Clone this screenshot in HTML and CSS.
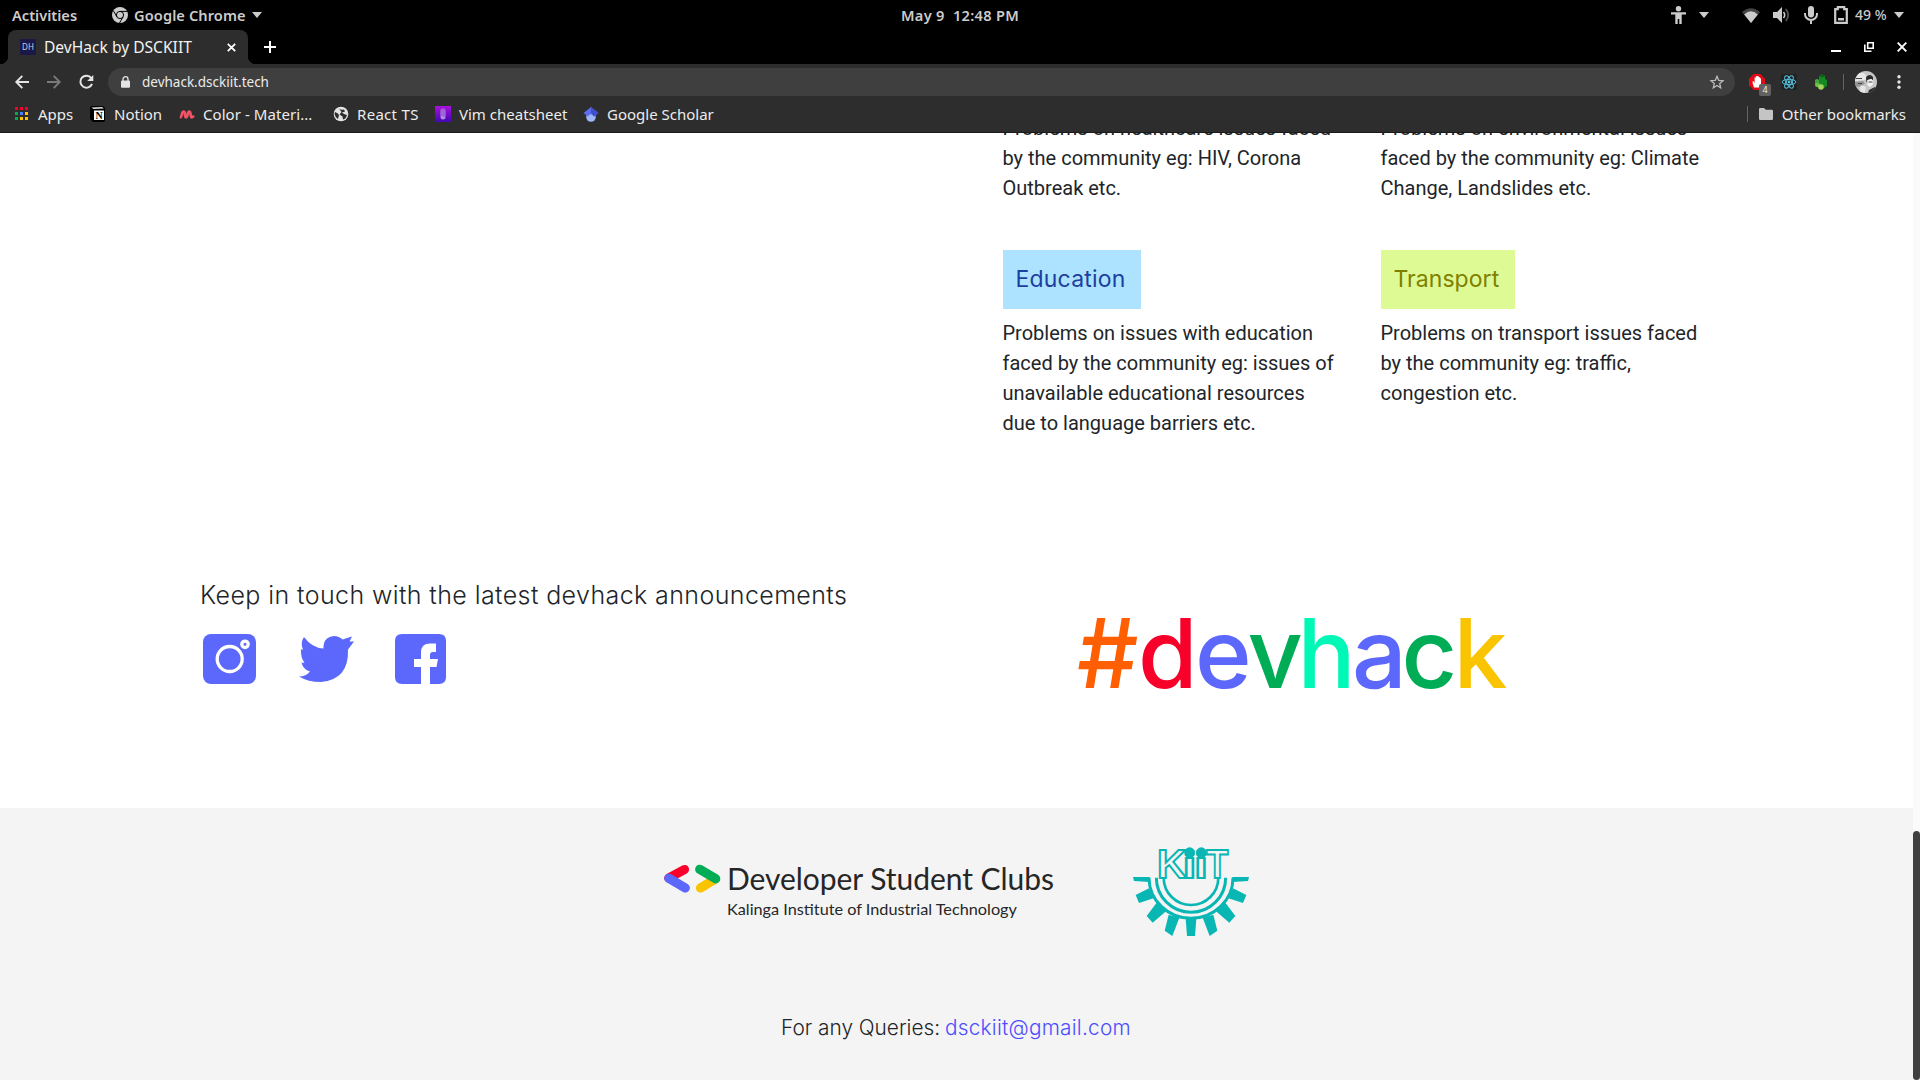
FILE: index.html
```
<!DOCTYPE html>
<html lang="en">
<head>
<meta charset="utf-8">
<title>DevHack by DSCKIIT</title>
<link rel="stylesheet" href="styles.css">
</head>
<body>
<header class="topbar">
  <div class="top-left">
    <span class="activities">Activities</span>
    <svg class="chrome-ic" viewBox="0 0 16 16"><circle cx="8" cy="8" r="8" fill="#ccc"/><g fill="none" stroke="#000" stroke-width="1"><circle cx="8" cy="8" r="3.6"/><path d="M8 4.4h7.4M4.9 9.8L1.3 3.6M11.1 9.8L7.5 16"/></g></svg>
    <span class="appname">Google Chrome</span>
    <i class="caret"></i>
  </div>
  <span class="clock">May 9&nbsp; 12:48 PM</span>
  <div class="top-right">
    <svg class="access" viewBox="0 0 15 18" fill="#ccc"><circle cx="7.5" cy="2.7" r="2.7"/><path d="M0 6.2h15v2.3h-4.3V18H8.3v-5H6.7v5H4.3V8.5H0z"/></svg>
    <i class="caret access-caret"></i>
    <svg class="wifi" viewBox="0 0 18 15"><path d="M9 15L0 4Q9-3.6 18 4z" fill="#444"/><path d="M9 15L2.2 6.6Q9 0 15.8 6.6z" fill="#ccc"/></svg>
    <svg class="vol" viewBox="0 0 17 16"><path d="M0 5h4l5-5v16l-5-5H0z" fill="#ccc"/><path d="M10.5 5q2.4 3 0 6" fill="none" stroke="#ccc" stroke-width="1.6"/><path d="M12.7 2q5 6 0 12" fill="none" stroke="#555" stroke-width="1.8"/></svg>
    <svg class="mic" viewBox="0 0 14 18"><rect x="4" y="0" width="6" height="11.5" rx="3" fill="#ccc"/><path d="M1 7v1a6 6 0 0 0 12 0V7M7 14v4" fill="none" stroke="#ccc" stroke-width="2"/></svg>
    <svg class="batt" viewBox="0 0 14 18"><path d="M1.2 3.2h2.6V1.2h6.4v2h2.6v13.6H1.2z" fill="none" stroke="#ccc" stroke-width="2.2"/><path d="M4 12h6v2.5H4z" fill="#ccc"/></svg>
    <span class="pct">49 %</span>
    <i class="caret"></i>
  </div>
</header>

<div class="tabstrip">
  <div class="tab">
    <span class="fav">DH</span>
    <span class="tab-title">DevHack by DSCKIIT</span>
    <svg class="tab-x" viewBox="0 0 9 9"><path d="M.8.8l7.4 7.4M8.2.8L.8 8.2" stroke="#fff" stroke-width="1.8"/></svg>
  </div>
  <svg class="plus" viewBox="0 0 12 12"><path d="M6 0v12M0 6h12" stroke="#fff" stroke-width="2"/></svg>
  <div class="winctl">
    <svg width="10" height="10" viewBox="0 0 10 10"><path d="M0 9h10" stroke="#fff" stroke-width="2"/></svg>
    <svg width="10" height="10" viewBox="0 0 10 10" fill="none" stroke="#fff"><path d="M3.7.8h5.5v5.4H3.7z" stroke-width="1.6"/><path d="M.8 2.5v6.7h6.7" stroke-width="1.6"/></svg>
    <svg width="10" height="10" viewBox="0 0 10 10"><path d="M.7.7l8.6 8.6M9.3.7L.7 9.3" stroke="#fff" stroke-width="1.9"/></svg>
  </div>
</div>

<div class="toolbar">
  <svg class="back" viewBox="0 0 14 14" fill="none" stroke="#e4e4e4" stroke-width="1.9"><path d="M14 7H1.5M7.3.8L1.3 7l6 6.2"/></svg>
  <svg class="fwd" viewBox="0 0 14 14" fill="none" stroke="#7a7a7a" stroke-width="1.9"><path d="M0 7h12.5M6.7.8l6 6.2-6 6.2"/></svg>
  <svg class="reload" viewBox="0 0 15 14"><path d="M12.3 3.2A6 6 0 1 0 13 8.8" fill="none" stroke="#e4e4e4" stroke-width="2"/><path d="M14.3 0v6H8.2z" fill="#e4e4e4"/></svg>
  <div class="omnibox">
    <svg class="lock" viewBox="0 0 9 12"><path d="M2 5V3.2a2.5 2.5 0 0 1 5 0V5" fill="none" stroke="#e4e4e4" stroke-width="1.3"/><rect y="4.4" width="9" height="7.4" rx="1" fill="#e4e4e4"/></svg>
    <span class="url">devhack.dsckiit.tech</span>
    <svg class="star" viewBox="0 0 14 14"><path d="M7 1.3l1.7 4 4.3.4-3.3 2.8 1 4.3L7 10.500l-3.700 2.300 1-4.300L1 5.700l4.300-.4z" fill="none" stroke="#bbb" stroke-width="1.3"/></svg>
  </div>
  <div class="adblock">
    <svg viewBox="0 0 16 16"><path d="M4.7 0h6.6L16 4.7v6.6L11.3 16H4.7L0 11.300V4.700z" fill="#e60a14"/><path d="M5 13.500Q3.600 10 3.400 7.400l1.200-.2 1 2V3.500h1.300V2.300h1.300V2h1.300v1h1.300v1.200h1.200V10q0 2-1.300 3.500z" fill="#fff"/></svg>
    <span class="count">4</span>
  </div>
  <svg class="react" viewBox="0 0 16 16"><path fill="#222" d="M0 0h16v16H0z"/><g fill="none" stroke="#53c1de" stroke-width="1"><ellipse cx="8" cy="8" rx="6.900" ry="2.700"/><ellipse cx="8" cy="8" rx="6.900" ry="2.700" transform="rotate(60 8 8)"/><ellipse cx="8" cy="8" rx="6.900" ry="2.700" transform="rotate(120 8 8)"/></g><circle cx="8" cy="8" r="1.400" fill="#53c1de"/></svg>
  <svg class="green" viewBox="0 0 12 16"><path d="M4 2q3-3 6 0v3l2 1v6l-3 2H4z" fill="#158a22"/><path d="M4 2q3-3 6 0-3 3-6 0z" fill="#0c6518"/><path d="M0 6q2-2 4 0v6H0z" fill="#3fa63c"/><circle cx="2.500" cy="11" r="2.300" fill="#6cc04a"/><circle cx="6" cy="13" r="2.800" fill="#a3d65c"/></svg>
  <i class="vsep"></i>
  <svg class="avatar" viewBox="0 0 22 22"><defs><clipPath id="av"><circle cx="11" cy="11" r="11"/></clipPath></defs><g clip-path="url(#av)"><path fill="#c6c6c6" d="M0 0h22v22H0z"/><path fill="#e6e6e6" d="M0 2h9l3 4-2 3-10 1zM6 14l5 2-1 6H4z"/><path fill="#959595" d="M0 11l8-1 2 3-7 3-3-1z"/><path fill="#2b2b2b" d="M11 6q4-4 7 0v4l-1.500-2-4 1-1 3zM14 19l6-3 2 6h-9z"/><path fill="#f3f3f3" d="M12.500 9l4-1 2 2-1 4-3 2-2-2z"/><path fill="#444" d="M1 7h6v1H1zM3 12h4v1H3zM13.500 10.500h4v1h-4z"/></g></svg>
  <svg class="dots" viewBox="0 0 4 14" fill="#e4e4e4"><circle cx="2" cy="1.700" r="1.700"/><circle cx="2" cy="7" r="1.700"/><circle cx="2" cy="12.300" r="1.700"/></svg>
</div>

<nav class="bookmarks">
  <a class="bm bm-apps"><svg viewBox="0 0 16 16"><path fill="#f4002a" d="M1 1h3v3H1zM6 1h3v3H6zM11 1h3v3h-3z"/><path fill="#00ac54" d="M1 6h3v3H1zM1 11h3v3H1z"/><path fill="#4a7dff" d="M6 6h3v3H6z"/><path fill="#fcc404" d="M11 6h3v3h-3zM6 11h3v3H6zM11 11h3v3h-3z"/></svg>Apps</a>
  <a class="bm bm-notion"><svg viewBox="0 0 16 16"><path d="M0 1l2-1h11l2 2v13l-1 1H3l-3-3z" fill="#000"/><path d="M1.500 1.500L12 1l2 1.500L3.500 3z" fill="#ddd"/><path d="M4 4.500h10V14H4z" fill="#fff"/><text x="9" y="13" text-anchor="middle" class="n-glyph">N</text></svg>Notion</a>
  <a class="bm bm-color"><svg viewBox="0 0 16 16"><path d="M.8 11.500q1.400 0 2-3t1.800-3q1.200 0 1.400 3t1 3q1 0 1.600-3t1.600-3q1.200 0 1.400 3t1.200 3q1 0 2-2" fill="none" stroke="#f25268" stroke-width="2.700"/></svg>Color - Materi...</a>
  <a class="bm bm-react"><svg viewBox="0 0 16 16"><circle cx="8" cy="8" r="7.300" fill="#e4e4e4"/><path d="M2 6q3 1 4 3l-1 4q-3-2-3.500-5zM6 2.500q2 2 5 1l1 2-3 1 2 1.500 3 1q-1 4-4 4.500l-.5-3-3-2 2-2.500z" fill="#2d2d2d"/></svg>React TS</a>
  <a class="bm bm-vim"><svg viewBox="0 0 16 16"><defs><linearGradient id="vg" x1="0" y1="0" x2="0" y2="1"><stop offset="0" stop-color="#a912dc"/><stop offset="1" stop-color="#4208b4"/></linearGradient></defs><path fill="url(#vg)" d="M0 0h16v16H0z"/><rect x="5.500" y="2.500" width="5" height="11" rx="2.500" fill="#b28ae0"/><path d="M7 10V4.500a1 1 0 0 1 2 0V11" fill="none" stroke="#7626c4" stroke-width=".7"/></svg>Vim cheatsheet</a>
  <a class="bm bm-scholar"><svg viewBox="0 0 16 16"><circle cx="8" cy="11" r="4.800" fill="#9db6fa"/><path d="M8 1l7.500 6L11 10.500Q8 6 5 10.500L.5 7z" fill="#5b6cf0"/><path d="M8 1l7.500 6L11 10.500 8 7z" fill="#3e4fc9"/></svg>Google Scholar</a>
  <i class="vsep bm-sep"></i>
  <svg class="folder" viewBox="0 0 14 12"><path d="M0 1.200Q0 0 1.200 0H5l1.800 1.800h6Q14 1.800 14 3v7.800Q14 12 12.800 12H1.200Q0 12 0 10.800z" fill="#c4c4c4"/></svg>
  <span class="other">Other bookmarks</span>
</nav>

<main class="page">
  <div class="content">
    <section class="topics">
      <div class="topic"><p class="lead">Problems on healthcare issues faced<br>by the community eg: HIV, Corona<br>Outbreak etc.</p>
        <h3 class="badge edu">Education</h3>
        <p>Problems on issues with education<br>faced by the community eg: issues of<br>unavailable educational resources<br>due to language barriers etc.</p></div>
      <div class="topic"><p class="lead">Problems on environmental issues<br>faced by the community eg: Climate<br>Change, Landslides etc.</p>
        <h3 class="badge trans">Transport</h3>
        <p>Problems on transport issues faced<br>by the community eg: traffic,<br>congestion etc.</p></div>
    </section>
    <section class="touch">
      <div class="touch-left">
        <h2>Keep in touch with the latest devhack announcements</h2>
        <div class="social">
          <svg class="ig" viewBox="0 0 53 50"><rect width="53" height="50" rx="8" fill="#5b68fb"/><g fill="none" stroke="#fff" stroke-width="3.300"><circle cx="26.700" cy="25" r="12.500"/><circle cx="42" cy="10.300" r="3.200"/></g></svg>
          <svg class="tw" viewBox="0 0 55 46"><path d="M5 1Q13 12 24.500 12.500 24 1 35 0q5 0 8.500 3.500L53 .5l-2.500 5 4.500 0-6 8q1 30-27 32.500Q9 46 0 40.500q7 0 11-5-7-2-8.500-9 1.500.5 3 0Q1.500 22 2 13l2 1Q1 6.500 5 1z" fill="#5b68fb"/></svg>
          <svg class="fb" viewBox="0 0 51 50"><path d="M7 0h37q7 0 7 7v36q0 7-7 7h-9V33h6.500l1.500-8h-8v-4q0-3 3-3h3V9.500h-6q-9 0-9 9V25h-7v8h7v17H7q-7 0-7-7V7q0-7 7-7z" fill="#5b68fb"/></svg>
        </div>
      </div>
      <svg class="hashtag" viewBox="0 0 440 100"><text y="78"><tspan x="2" fill="#ff5f00">#</tspan><tspan x="63" fill="#f80029">d</tspan><tspan x="120" fill="#5b68fb">e</tspan><tspan x="172.500" fill="#00ad56">v</tspan><tspan x="222.500" fill="#00f8b6">h</tspan><tspan x="277" fill="#5b68fb">a</tspan><tspan x="326.500" fill="#00ad56">c</tspan><tspan x="378.500" fill="#fbc400">k</tspan></text></svg>
    </section>
    <footer class="footer">
      <div class="logos">
        <svg class="dsc-mark" viewBox="0 0 58 30" fill="none" stroke-linecap="round" stroke-width="9.200"><path d="M4.800 14L20.500 5.500" stroke="#f80029"/><path d="M4.800 14.300L21.300 24" stroke="#5b68fb"/><path d="M36.500 24L51.500 14.800" stroke="#fbc400"/><path d="M35.700 5.300l16 9.500" stroke="#00ad56"/></svg>
        <div class="dsc-text"><span class="dsc-name">Developer Student Clubs</span><span class="dsc-sub">Kalinga Institute of Industrial Technology</span></div>
        <svg class="kiit" viewBox="0 0 420 330"><g fill="none" stroke="#08b6b4"><path d="M131 128a82 82 0 0 0 164 0" stroke-width="8"/><path d="M109 128a104 104 0 0 0 208 0" stroke-width="9"/><path d="M87 128a126 122 0 0 0 252 0" stroke-width="9"/></g>
        <g fill="#08b6b4"><path id="teeth" d="M39 126h50v15l-47-3zM47 180l40-20 16 29-46 15zM80 243l30-40 28 26-40 34zM134 287l12-48 32 9-21 55zM201 303l-4-52h16v52z"/><use href="#teeth" transform="matrix(-1 0 0 1 426 0)"/></g>
        <g class="kiit-word"><text x="111" y="129">K</text><text class="ii" transform="translate(188 129) scale(1.300 1)">i</text><text class="ii" transform="translate(223 129) scale(1.300 1)">i</text><text x="259" y="129" textLength="66" lengthAdjust="spacingAndGlyphs">T</text></g><g fill="#08b6b4"><circle cx="209" cy="53" r="16"/><circle cx="244" cy="53" r="16"/></g></svg>
      </div>
      <p class="queries">For any Queries: <a>dsckiit@gmail.com</a></p>
    </footer>
  </div>
  <div class="scroll"><i class="thumb"></i></div>
</main>
</body>
</html>
```
FILE: styles.css
```
* { box-sizing: border-box; }
body { margin: 0; width: 1920px; height: 1080px; overflow: hidden; display: flex; flex-direction: column; background: #fff; font-family: "Noto Sans", sans-serif; }
svg { display: block; flex: none; overflow: visible; }
i { display: block; flex: none; }
h2, h3, p { margin: 0; font-weight: 400; }

/* desktop bar */
.topbar { height: 30px; flex: none; background: #000; color: #ccc; display: grid; grid-template-columns: 1fr auto 1fr; font-weight: 600; font-size: 14.600px; line-height: 30px; white-space: nowrap; }
.topbar > div { display: flex; align-items: center; }
.top-left { padding-left: 12px; }
.activities { width: 100px; }
.chrome-ic { width: 16px; height: 16px; margin-right: 6px; }
.appname { width: 118px; letter-spacing: .1px; }
.caret { width: 10px; height: 6px; background: #ccc; clip-path: polygon(0 0, 100% 0, 50% 100%); }
.clock { letter-spacing: .3px; }
.top-right { justify-content: flex-end; padding-right: 16px; }
.access { width: 15px; height: 18px; margin-right: 13px; }
.access-caret { margin-right: 33px; }
.wifi { width: 18px; height: 15px; margin-right: 13px; }
.vol { width: 17px; height: 16px; margin-right: 14px; }
.mic { width: 14px; height: 18px; margin-right: 16px; }
.batt { width: 14px; height: 18px; margin-right: 7px; }
.pct { font-size: 14px; width: 39px; font-weight: 500; }

/* browser tabs */
.tabstrip { height: 34px; flex: none; background: #000; display: flex; align-items: center; padding: 0 13px 0 8px; }
.tab { width: 240px; height: 34px; background: #2d2d2d; border-radius: 8px 8px 0 0; display: flex; align-items: center; padding: 0 12px; position: relative; }
.tab::before, .tab::after { content: ""; position: absolute; bottom: 0; width: 8px; height: 8px; }
.tab::before { left: -8px; background: radial-gradient(circle at 0 0, #000 8px, #2d2d2d 8.500px); }
.tab::after { right: -8px; background: radial-gradient(circle at 100% 0, #000 8px, #2d2d2d 8.500px); }
.fav { width: 16px; height: 16px; border-radius: 1px; background: #191847; color: #d0d0dc; font: 8px/16px "Noto Sans", sans-serif; text-align: center; }
.tab-title { margin-left: 8px; width: 184px; font-size: 15.600px; line-height: 22px; color: #f2f2f2; white-space: nowrap; }
.tab-x { width: 9px; height: 9px; }
.plus { width: 12px; height: 12px; margin-left: 16px; }
.winctl { margin-left: auto; display: flex; gap: 23px; }

/* navigation */
.toolbar { height: 36px; flex: none; background: #2d2d2d; display: flex; align-items: center; padding: 0 19px 0 15px; }
.back { width: 14px; height: 14px; margin-right: 18px; }
.fwd { width: 14px; height: 14px; margin-right: 18px; }
.reload { width: 15px; height: 14px; margin-right: 14px; }
.omnibox { width: 1627px; height: 28px; border-radius: 14px; background: #3f3f3f; display: flex; align-items: center; padding: 0 11px 0 13px; }
.lock { width: 9px; height: 12px; margin-right: 12px; }
.url { font-size: 13.500px; color: #ececec; }
.star { width: 14px; height: 14px; margin-left: auto; }
.adblock { width: 16px; height: 16px; margin-left: 14px; position: relative; }
.count { position: absolute; left: 10px; top: 10px; width: 12px; height: 12px; border-radius: 2px; background: #616161; color: #eee; font: 9px/12px "Noto Sans", sans-serif; text-align: center; }
.react { width: 16px; height: 16px; margin-left: 16px; }
.green { width: 12px; height: 16px; margin-left: 18px; }
.vsep { width: 1px; height: 16px; background: #636363; }
.toolbar .vsep { margin-left: 16px; }
.avatar { width: 22px; height: 22px; margin-left: 11px; }
.dots { width: 4px; height: 14px; margin-left: auto; }

.bookmarks { height: 33px; flex: none; background: #2d2d2d; border-bottom: 1px solid #1b1b1b; display: flex; align-items: center; padding: 0 14px 5px; font-size: 15px; line-height: 20px; color: #ececec; white-space: nowrap; }
.bm { display: flex; align-items: center; gap: 8px; }
.bm svg { width: 16px; height: 16px; }
.bm-apps { width: 76px; }
.bm-notion { width: 89px; gap: 8px; }
.bm-color { width: 154px; letter-spacing: .060px; }
.bm-react { width: 102px; letter-spacing: .300px; }
.bm-vim { width: 148px; }
.n-glyph { font: 700 10px "Liberation Serif", serif; fill: #000; }
.bm-sep { margin-left: auto; }
.folder { width: 14px; height: 12px; margin: 0 9px 0 11px; }

/* page */
.page { height: 947px; flex: none; display: flex; font-family: Inter, sans-serif; color: #212529; }
.content { width: 1913px; overflow: hidden; }
.topics { height: 425px; padding-left: 1002.500px; display: flex; margin-top: -20px; }
.topic { width: 378px; flex: none; }
.topic p { font: 20px/30px Roboto, sans-serif; white-space: nowrap; }
.topic .lead { height: 137px; }
.badge { height: 59px; padding-left: 13px; margin-bottom: 9px; font-size: 23px; line-height: 59px; font-weight: 400; white-space: nowrap; }
.edu { width: 138px; background: #aee3ff; color: #1c3fa0; letter-spacing: .200px; }
.trans { width: 134px; background: #ddfa94; color: #808000; letter-spacing: .050px; }
.touch { height: 270px; padding: 38px 0 0 200px; display: flex; }
.touch-left { width: 875px; }
.touch h2 { font-size: 25px; line-height: 39px; height: 40px; font-weight: 280; letter-spacing: .400px; white-space: nowrap; }
.social { margin: 18px 0 0 2.500px; display: flex; align-items: center; }
.ig { width: 53px; height: 50px; margin-right: 43px; }
.tw { width: 55px; height: 46px; margin-right: 41px; }
.fb { width: 51px; height: 50px; }
.hashtag { width: 440px; height: 100px; margin-top: 34px; font: 480 96.500px Inter, sans-serif; }

.footer { height: 272px; background: #f4f4f4; }
.logos { display: flex; padding: 27px 0 0 664px; height: 200px; }
.dsc-mark { width: 58px; height: 30px; margin-top: 29px; }
.dsc-text { width: 398px; padding: 23px 0 0 5px; display: flex; flex-direction: column; font-family: Lato, sans-serif; white-space: nowrap; color: #262626; }
.dsc-name { font-size: 30px; line-height: 40px; letter-spacing: -.050px; }
.dsc-sub { font-size: 16.250px; line-height: 21px; }
.kiit { width: 140px; height: 110px; }
.kiit-word { font: 700 123px "Liberation Sans", sans-serif; fill: #f4f4f4; stroke: #08b6b4; stroke-width: 6px; }
.ii { font-size: 112px; }
.queries { font-size: 20.800px; line-height: 40px; font-weight: 280; padding-left: 781px; white-space: nowrap; }
.queries a { color: #4c4cff; letter-spacing: .250px; margin-left: -1px; }
.scroll { width: 7px; background: #fafafa; padding-top: 698px; }
.thumb { height: 249px; border-radius: 4px; background: #404040; }
```
